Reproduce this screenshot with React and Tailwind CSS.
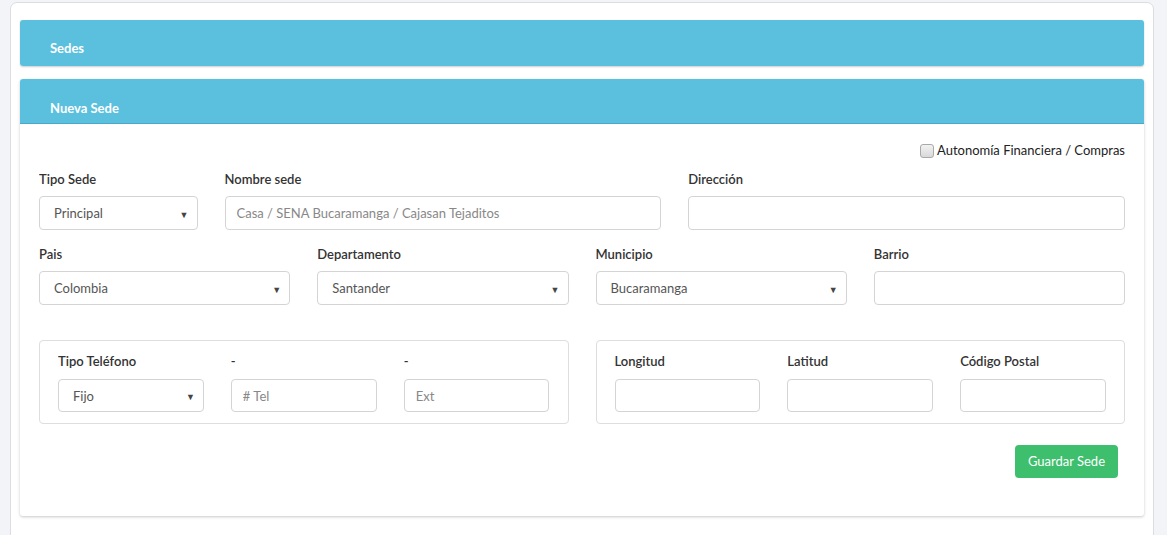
import React from "react";

// Formulario "Nueva Sede" — tarjetas con cabecera celeste, grid de 12 columnas.
const FONT = { fontFamily: "Lato, 'Open Sans', Arial, sans-serif" };

function Label({ children, mb = "mb-[8px]" }) {
    return <div className={`text-[13px] leading-[18px] font-semibold text-[#333] ${mb} truncate`}>{children}</div>;
}

function FakeSelect({ value, h = "h-[34px]" }) {
    return (
        <div className={`${h} border border-[#d4d4d4] rounded-[4px] bg-white flex items-center justify-between pl-[14px] pr-[8px] pt-[2px]`}>
            <span className="text-[13px] text-[#555]">{value}</span>
            <span className="text-[9px] text-[#444] leading-none">▼</span>
        </div>
    );
}

function TextInput({ placeholder = "", h = "h-[34px]" }) {
    return (
        <input
            placeholder={placeholder}
            className={`${h} w-full border border-[#d4d4d4] rounded-[4px] bg-white px-[11px] text-[13px] text-[#555] placeholder:text-[#888] outline-none`}
        />
    );
}

function Field({ label, children, className = "", mb }) {
    return (
        <div className={className}>
            <Label mb={mb}>{label}</Label>
            {children}
        </div>
    );
}

export default function App() {
    return (
        <div className="h-[535px] bg-[#f3f4f8] pl-[10px] pr-[13px] pt-[2px] overflow-hidden" style={FONT}>
            <div className="bg-white border border-[#dcdde2] rounded-t-[7px] h-[545px] px-[9px] pt-[17px]">
                {/* Sedes */}
                <div className="rounded-[3px] shadow-[0_1px_2px_rgba(0,0,0,0.2)] overflow-hidden">
                    <div className="bg-[#5bc0de] h-[46px] pl-[30px] pt-[19px]">
                        <div className="text-[13px] leading-[18px] font-bold text-white">Sedes</div>
                    </div>
                </div>

                {/* Nueva Sede */}
                <div className="mt-[13px] rounded-[3px] shadow-[0_1px_3px_rgba(0,0,0,0.22)] overflow-hidden">
                    <div className="bg-[#5bc0de] h-[45px] pl-[30px] pt-[20px] border-b border-[#4aa9c6]">
                        <div className="text-[13px] leading-[18px] font-bold text-white">Nueva Sede</div>
                    </div>
                    <div className="px-[19px] pt-[19px] pb-[38px]">
                        <div className="flex justify-end items-center gap-[3px] h-[16px]">
                            <span className="w-[14px] h-[14px] rounded-[3px] border border-[#a9a9a9] bg-gradient-to-b from-[#f2f2f2] to-[#d9d9d9]" />
                            <span className="text-[13px] text-[#222]">Autonomía Financiera / Compras</span>
                        </div>

                        <div className="grid grid-cols-12 gap-x-[27px] mt-[11px]">
                            <Field label="Tipo Sede" className="col-span-2"><FakeSelect value="Principal" /></Field>
                            <Field label="Nombre sede" className="col-span-5"><TextInput placeholder="Casa / SENA Bucaramanga / Cajasan Tejaditos" /></Field>
                            <Field label="Dirección" className="col-span-5"><TextInput /></Field>
                        </div>

                        <div className="grid grid-cols-12 gap-x-[27px] mt-[15px]">
                            <Field label="Pais" className="col-span-3"><FakeSelect value="Colombia" /></Field>
                            <Field label="Departamento" className="col-span-3"><FakeSelect value="Santander" /></Field>
                            <Field label="Municipio" className="col-span-3"><FakeSelect value="Bucaramanga" /></Field>
                            <Field label="Barrio" className="col-span-3"><TextInput /></Field>
                        </div>

                        <div className="grid grid-cols-12 gap-x-[27px] mt-[35px]">
                            <div className="col-span-6 border border-[#dedede] rounded-[4px] px-[18px] pt-[11px] pb-[11px] grid grid-cols-3 gap-x-[27px]">
                                <Field label="Tipo Teléfono" mb="mb-[9px]"><FakeSelect value="Fijo" h="h-[33px]" /></Field>
                                <Field label="-" mb="mb-[9px]"><TextInput placeholder="# Tel" h="h-[33px]" /></Field>
                                <Field label="-" mb="mb-[9px]"><TextInput placeholder="Ext" h="h-[33px]" /></Field>
                            </div>
                            <div className="col-span-6 border border-[#dedede] rounded-[4px] px-[18px] pt-[11px] pb-[11px] grid grid-cols-3 gap-x-[27px]">
                                <Field label="Longitud" mb="mb-[9px]"><TextInput h="h-[33px]" /></Field>
                                <Field label="Latitud" mb="mb-[9px]"><TextInput h="h-[33px]" /></Field>
                                <Field label="Código Postal" mb="mb-[9px]"><TextInput h="h-[33px]" /></Field>
                            </div>
                        </div>

                        <div className="flex justify-end mt-[21px] pr-[7px]">
                            <button className="h-[33px] px-[13px] rounded-[4px] bg-[#3dbf6e] text-white text-[13px]">Guardar Sede</button>
                        </div>
                    </div>
                </div>
            </div>
        </div>
    );
}
